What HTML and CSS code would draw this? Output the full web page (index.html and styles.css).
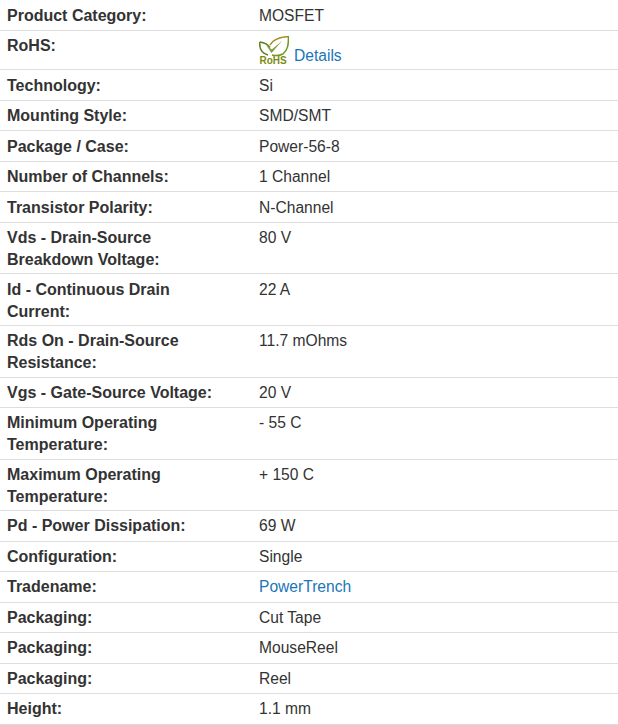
FILE: index.html
```html
<!DOCTYPE html>
<html lang="en">
<head>
<meta charset="utf-8">
<title>Product Specifications</title>
<link rel="stylesheet" href="styles.css">
</head>
<body>
<div class="specs">
  <div class="row"><div class="label">Product Category:</div><div class="value">MOSFET</div></div>
  <div class="row row-rohs"><div class="label">RoHS:</div><div class="value rohs">
    <svg class="rohs-logo" viewBox="0 0 30 30" width="30" height="30" aria-hidden="true">
      <path d="M0.8 6 C4 6.5 9 8.5 11 11.5 M0.8 6 C0.3 11 2 17 9 19" fill="none" stroke="#5a7f1e" stroke-width="1.5"/>
      <path d="M30 0.5 C22 1 14 3 11 9" fill="none" stroke="#a08c20" stroke-width="1.5"/>
      <path d="M29.5 0.5 C29.5 8 29 14 24 18 C21 19.5 17 20 13 19" fill="none" stroke="#6f9a1e" stroke-width="1.5"/>
      <path d="M7 9 L12.5 17 L23 5 L12.8 13.5 Z" fill="#7d9c3a"/>
      <text x="0.5" y="28" class="rohs-text">RoHS</text>
    </svg>
    <a class="link" href="#">Details</a>
  </div></div>
  <div class="row"><div class="label">Technology:</div><div class="value">Si</div></div>
  <div class="row"><div class="label">Mounting Style:</div><div class="value">SMD/SMT</div></div>
  <div class="row"><div class="label">Package / Case:</div><div class="value">Power-56-8</div></div>
  <div class="row"><div class="label">Number of Channels:</div><div class="value">1 Channel</div></div>
  <div class="row"><div class="label">Transistor Polarity:</div><div class="value">N-Channel</div></div>
  <div class="row row-tall"><div class="label">Vds - Drain-Source Breakdown Voltage:</div><div class="value">80 V</div></div>
  <div class="row row-tall"><div class="label">Id - Continuous Drain Current:</div><div class="value">22 A</div></div>
  <div class="row row-tall"><div class="label">Rds On - Drain-Source Resistance:</div><div class="value">11.7 mOhms</div></div>
  <div class="row"><div class="label">Vgs - Gate-Source Voltage:</div><div class="value">20 V</div></div>
  <div class="row row-tall"><div class="label">Minimum Operating Temperature:</div><div class="value">- 55 C</div></div>
  <div class="row row-tall"><div class="label">Maximum Operating Temperature:</div><div class="value">+ 150 C</div></div>
  <div class="row"><div class="label">Pd - Power Dissipation:</div><div class="value">69 W</div></div>
  <div class="row"><div class="label">Configuration:</div><div class="value">Single</div></div>
  <div class="row"><div class="label">Tradename:</div><div class="value"><a class="link" href="#">PowerTrench</a></div></div>
  <div class="row"><div class="label">Packaging:</div><div class="value">Cut Tape</div></div>
  <div class="row"><div class="label">Packaging:</div><div class="value">MouseReel</div></div>
  <div class="row"><div class="label">Packaging:</div><div class="value">Reel</div></div>
  <div class="row"><div class="label">Height:</div><div class="value">1.1 mm</div></div>
</div>
</body>
</html>
```
FILE: styles.css
```css
html, body {
  margin: 0;
  padding: 0;
  background: #fff;
}
body {
  font-family: "Liberation Sans", Arial, sans-serif;
  font-size: 16px;
  line-height: 22px;
  color: #333;
}
.specs {
  width: 618px;
  padding-top: 1px;
}
.row {
  display: grid;
  grid-template-columns: 252px 1fr;
  padding: 4.3px 0 3.2px 7px;
  border-bottom: 1px solid #ddd;
}
.row-tall {
  padding-bottom: 2.25px;
}
.row-rohs {
  padding-top: 3.5px;
  padding-bottom: 2.5px;
}
.label {
  font-weight: 700;
  color: #333;
  width: 215px;
}
.value {
  font-size: 15.6px;
}
.rohs {
  display: flex;
  align-items: flex-start;
  gap: 5px;
}
.rohs-logo {
  display: block;
  flex: none;
  margin-top: 1px;
}
.rohs-text {
  font-family: "Liberation Sans", Arial, sans-serif;
  font-size: 10px;
  font-weight: 700;
  fill: #7a8c10;
}
.link {
  color: #1a76b8;
  text-decoration: none;
}
.rohs .link {
  margin-top: 10px;
}
```
